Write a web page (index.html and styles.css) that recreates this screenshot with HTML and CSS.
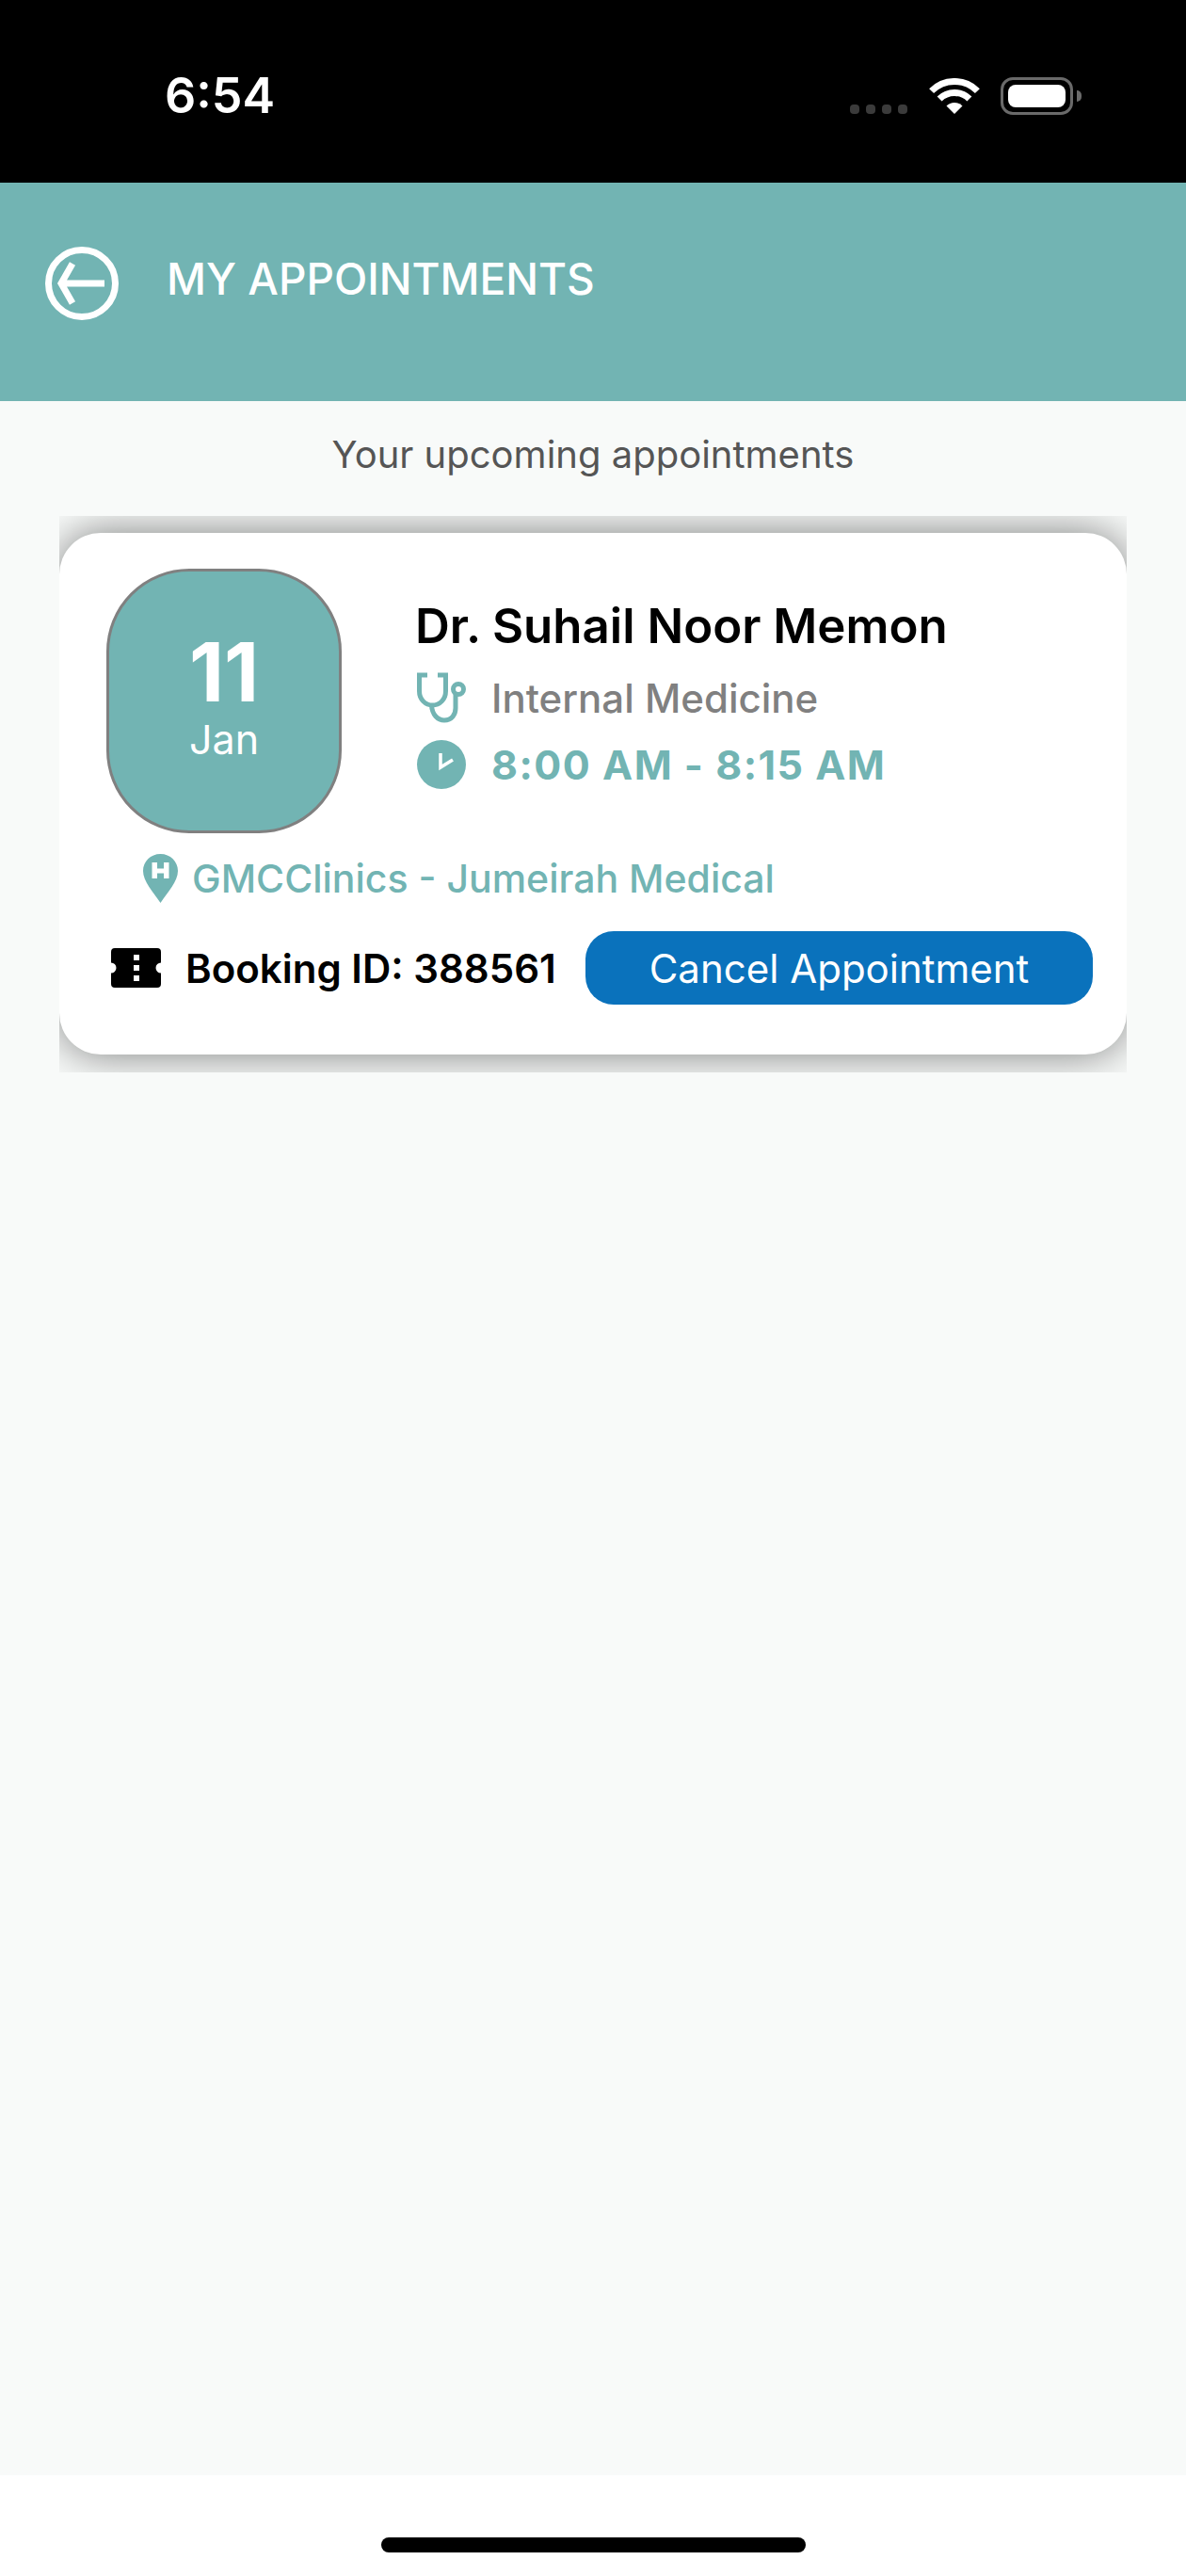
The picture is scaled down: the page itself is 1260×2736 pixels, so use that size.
FILE: index.html
```html
<!DOCTYPE html>
<html>
<head>
<meta charset="UTF-8">
<title>My Appointments</title>
<link rel="stylesheet" href="styles.css">
</head>
<body>
<div class="app">

	<div class="statusBar">
		<span class="clock">6:54</span>
		<div class="statusIcons">
			<div class="dots"><i></i><i></i><i></i><i></i></div>
			<svg class="wifi" width="54" height="38" viewBox="0 0 54 38">
				<path d="M2.6 13.6A34.5 34.5 0 0 1 51.4 13.6" fill="none" stroke="#fff" stroke-width="7"/>
				<path d="M11.1 22.1A22.5 22.5 0 0 1 42.9 22.1" fill="none" stroke="#fff" stroke-width="7"/>
				<path d="M27 38L18.5 29.5A12 12 0 0 1 35.5 29.5Z" fill="#fff"/>
			</svg>
			<div class="battery"><div class="batteryFill"></div></div>
			<div class="batteryTip"></div>
		</div>
	</div>

	<div class="header">
		<svg class="backIcon" width="78" height="78" viewBox="0 0 78 78">
			<circle cx="39" cy="39" r="35.5" fill="none" stroke="#fff" stroke-width="7"/>
			<path d="M29 18L17 39L29 60M19 39H63" fill="none" stroke="#fff" stroke-width="7"/>
		</svg>
		<h1 class="title">MY APPOINTMENTS</h1>
	</div>

	<div class="main">
		<p class="subtitle">Your upcoming appointments</p>

		<div class="cardWrap">
			<div class="card">
				<div class="cardTop">
					<div class="dateBox">
						<span class="day">11</span>
						<span class="month">Jan</span>
					</div>
					<div class="info">
						<div class="doctor">Dr. Suhail Noor Memon</div>
						<div class="infoRow specialty">
							<svg class="rowIcon" width="52" height="54" viewBox="0 0 52 54">
								<path d="M11 3H2.500V20C2.500 29 9 35 16.500 35C24 35 30.500 29 30.500 20V3H22" fill="none" stroke="#72b4b3" stroke-width="5"/>
								<path d="M15.500 35C16 45 22 51 29 51C37 51 41 45 41 38V24" fill="none" stroke="#72b4b3" stroke-width="5"/>
								<circle cx="44" cy="18" r="5.500" fill="none" stroke="#72b4b3" stroke-width="5"/>
							</svg>
							<span>Internal Medicine</span>
						</div>
						<div class="infoRow time">
							<svg class="rowIcon" width="52" height="52" viewBox="0 0 52 52">
								<circle cx="26" cy="26" r="26" fill="#72b4b3"/>
								<path d="M25 14V29L38 21" fill="none" stroke="#fff" stroke-width="3.500"/>
							</svg>
							<span>8:00 AM - 8:15 AM</span>
						</div>
					</div>
				</div>

				<div class="location">
					<svg width="37" height="52" viewBox="0 0 37 52">
						<path d="M18.500 0C29 0 37 8 37 18C37 29 26 41 18.500 52C11 41 0 29 0 18C0 8 8 0 18.500 0Z" fill="#72b4b3"/>
						<path d="M9.500 9H15V15.500H22V9H27.500V26H22V20.500H15V26H9.500Z" fill="#fff"/>
					</svg>
					<span>GMCClinics - Jumeirah Medical</span>
				</div>

				<div class="bookingRow">
					<svg class="ticket" width="53" height="42" viewBox="0 0 53 42">
						<path d="M4 0H49A4 4 0 0 1 53 4V15.500A5.500 5.500 0 0 0 53 26.500V38A4 4 0 0 1 49 42H4A4 4 0 0 1 0 38V26.500A5.500 5.500 0 0 0 0 15.500V4A4 4 0 0 1 4 0Z" fill="#000"/>
						<rect x="24" y="7" width="6" height="6" fill="#fff"/>
						<rect x="24" y="18" width="6" height="6" fill="#fff"/>
						<rect x="24" y="29" width="6" height="6" fill="#fff"/>
					</svg>
					<span class="bookingId">Booking ID: 388561</span>
					<button class="cancelBtn" type="button">Cancel Appointment</button>
				</div>
			</div>
		</div>
	</div>

	<div class="homeBar"><div class="homeIndicator"></div></div>

</div>
</body>
</html>
```

FILE: styles.css
```css
* {
  box-sizing: border-box;
}
body {
  margin: 0;
  background-color: #fff;
  font-family: Inter, "Noto Sans", sans-serif;
}
.app {
  display: flex;
  flex-direction: column;
  height: 2736px;
}

.statusBar {
  display: flex;
  justify-content: space-between;
  height: 194px;
  padding: 74px 111px 0 175px;
  background-color: #000;
}
.clock {
  color: #fff;
  font-size: 52px;
  line-height: 56px;
  font-weight: 600;
}
.statusIcons {
  display: flex;
  align-items: flex-start;
  padding-top: 8px;
}
.dots {
  display: flex;
  gap: 7px;
  margin: 29px 23px 0 0;
}
.dots i {
  width: 10px;
  height: 10px;
  border-radius: 4px;
  background-color: #3b3b3b;
}
.wifi {
  margin: 1px 22px 0 0;
}
.battery {
  width: 77px;
  height: 40px;
  padding: 5px;
  border: 3px solid #6a6a6a;
  border-radius: 13px;
}
.batteryFill {
  height: 100%;
  border-radius: 8px;
  background-color: #fff;
}
.batteryTip {
  width: 5px;
  height: 12px;
  margin: 14px 0 0 4px;
  border-radius: 0 6px 6px 0;
  background-color: #6a6a6a;
}

.header {
  display: flex;
  align-items: flex-start;
  height: 232px;
  padding: 68px 0 0 48px;
  background-color: #72b4b3;
}
.title {
  margin: 6px 0 0 51px;
  color: #fff;
  font-size: 46px;
  line-height: 56px;
  font-weight: 500;
}

.main {
  flex: 1;
  background-color: #f8faf9;
}
.subtitle {
  margin: 37px 0 45px;
  color: #555;
  font-size: 40px;
  line-height: 40px;
  text-align: center;
}
.cardWrap {
  margin: 0 63px;
  padding: 18px 0 19px;
  overflow: hidden;
}
.card {
  height: 554px;
  padding: 38px 36px 0 50px;
  border-radius: 44px;
  background-color: #fff;
  box-shadow: 0 0 46px rgba(0, 0, 0, 0.5);
}
.cardTop {
  display: flex;
}
.dateBox {
  display: flex;
  flex-direction: column;
  align-items: center;
  width: 250px;
  height: 281px;
  padding-top: 62px;
  border: 3px solid #808080;
  border-radius: 88px;
  background-color: #72b4b3;
  color: #fff;
}
.day {
  font-size: 86px;
  line-height: 90px;
  font-weight: 700;
}
.month {
  font-size: 43px;
  line-height: 52px;
}
.info {
  margin-left: 78px;
  padding-top: 31px;
}
.doctor {
  color: #000;
  font-size: 51px;
  line-height: 60px;
  font-weight: 600;
}
.infoRow {
  display: flex;
  align-items: center;
  gap: 27px;
  padding-left: 2px;
}
.specialty {
  margin-top: 19px;
  color: #808080;
  font-size: 42px;
  font-weight: 500;
}
.time {
  margin-top: 18px;
  color: #72b4b3;
  font-size: 43px;
  font-weight: 700;
  letter-spacing: 1.500px;
}
.location {
  display: flex;
  align-items: center;
  gap: 15px;
  margin: 22px 0 0 39px;
  color: #72b4b3;
  font-size: 41px;
  font-weight: 500;
}
.bookingRow {
  display: flex;
  align-items: center;
  margin: 30px 0 0 5px;
}
.ticket {
  margin-right: 26px;
}
.bookingId {
  width: 425px;
  color: #000;
  font-size: 42px;
  font-weight: 600;
  white-space: nowrap;
}
.cancelBtn {
  width: 539px;
  height: 78px;
  padding: 0;
  border: none;
  border-radius: 30px;
  background-color: #0a72bc;
  color: #fff;
  font-family: Inter, "Noto Sans", sans-serif;
  font-size: 42px;
}

.homeBar {
  height: 107px;
  padding-top: 66px;
  background-color: #fff;
}
.homeIndicator {
  width: 451px;
  height: 16px;
  margin: 0 auto;
  border-radius: 8px;
  background-color: #000;
}
```
